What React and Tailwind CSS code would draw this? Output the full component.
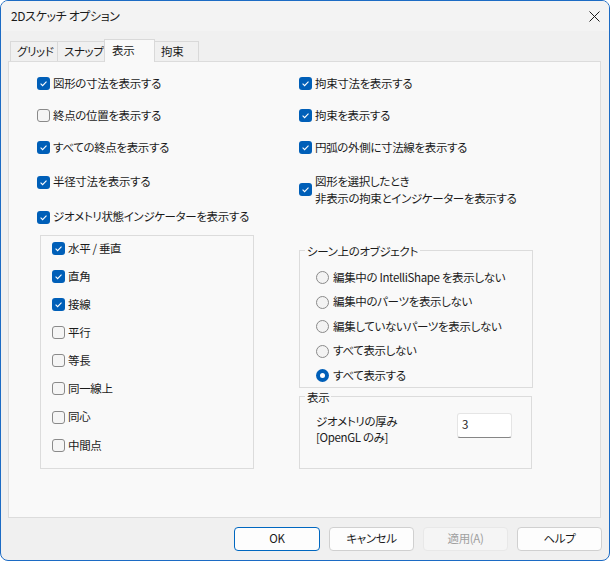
import React from 'react';

const font = "font-['Noto_Sans_CJK_JP','Noto_Sans',sans-serif] [font-feature-settings:'palt'] tracking-[-0.35px]";

const Box = ({ checked }) =>
  checked ? (
    <span className="w-[13px] h-[13px] rounded-[3px] bg-[#005fb8] flex items-center justify-center shrink-0">
      <svg width="13" height="13" viewBox="0 0 13 13">
        <path d="M3.6 6.7 L5.6 8.7 L9.5 4.6" fill="none" stroke="#ffffff" strokeWidth="1.1" />
      </svg>
    </span>
  ) : (
    <span className="w-[13px] h-[13px] rounded-[3px] border border-[#8a8a8a] bg-[#f5f5f5] shrink-0" />
  );

const Check = ({ checked, children, className = '' }) => (
  <div className={`flex items-center gap-[3px] h-[20px] ${className}`}>
    <Box checked={checked} />
    <span className="whitespace-nowrap">{children}</span>
  </div>
);

const Radio = ({ checked, children }) => (
  <div className="flex items-center gap-[4px] h-[20px]">
    {checked ? (
      <span className="w-[13px] h-[13px] rounded-full bg-[#005fb8] flex items-center justify-center shrink-0">
        <span className="w-[5px] h-[5px] rounded-full bg-white" />
      </span>
    ) : (
      <span className="w-[13px] h-[13px] rounded-full border border-[#8a8a8a] bg-[#f3f3f3] shrink-0" />
    )}
    <span className="whitespace-nowrap">{children}</span>
  </div>
);

const Button = ({ children, primary, disabled }) => (
  <button
    className={`h-[24px] rounded-[4px] border ${primary ? 'w-[86px]' : 'w-[85px]'} ${
      primary
        ? 'border-[#0067c0] bg-[#fdfdfd] text-[#1b1b1b]'
        : disabled
        ? 'border-[#e8e8e8] bg-[#f5f5f5] text-[#a0a0a0]'
        : 'border-[#d0d0d0] bg-[#fdfdfd] text-[#1b1b1b]'
    }`}
  >
    {children}
  </button>
);

const tabs = [
  { label: 'グリッド', w: 'w-[48px]' },
  { label: 'スナップ', w: 'w-[48px]' },
  { label: '表示', w: 'w-[51px]', active: true },
  { label: '拘束', w: 'w-[45px]' },
];

const sub = [
  ['水平 / 垂直', true],
  ['直角', true],
  ['接線', true],
  ['平行', false],
  ['等長', false],
  ['同一線上', false],
  ['同心', false],
  ['中間点', false],
];

const scene = [
  '編集中の IntelliShape を表示しない',
  '編集中のパーツを表示しない',
  '編集していないパーツを表示しない',
  'すべて表示しない',
  'すべて表示する',
];

export default function App() {
  return (
    <div
      className={`w-[610px] h-[561px] bg-[#f0f0f0] border border-[#1c6bc4] rounded-[8px] overflow-hidden flex flex-col text-[11.5px] text-[#1b1b1b] ${font}`}
    >
      {/* Title bar */}
      <div className="h-[30px] shrink-0 bg-[#f3f3f3] flex items-center justify-between pl-[10px] pr-[9px]">
        <span className="text-[12px]">2Dスケッチ オプション</span>
        <svg width="11" height="11" viewBox="0 0 11 11">
          <path d="M0.5 0.5 L10.5 10.5 M10.5 0.5 L0.5 10.5" stroke="#1b1b1b" strokeWidth="1" />
        </svg>
      </div>

      {/* Tabs */}
      <div className="mt-[8px] ml-[9px] h-[22px] flex items-end">
        {tabs.map((t, i) => (
          <div
            key={t.label}
            className={`${t.w} border border-b-0 border-[#d9d9d9] pl-[6px] flex items-center whitespace-nowrap ${
              t.active
                ? 'h-[23px] -mb-px -ml-px relative z-10 bg-[#f9f9f9] pl-[7px]'
                : i === 0
                ? 'h-[20px] bg-[#f0f0f0]'
                : 'h-[20px] bg-[#f0f0f0] -ml-px'
            }`}
          >
            {t.label}
          </div>
        ))}
      </div>

      {/* Panel */}
      <div className="ml-[7px] w-[593px] h-[457px] shrink-0 border border-[#dcdcdc] bg-[#f9f9f9] pl-[28px] pt-[11.5px] grid grid-cols-[262px_1fr]">
        {/* Left column */}
        <div className="flex flex-col">
          <Check checked>図形の寸法を表示する</Check>
          <Check className="mt-[12px]">終点の位置を表示する</Check>
          <Check checked className="mt-[12px]">すべての終点を表示する</Check>
          <Check checked className="mt-[14.5px]">半径寸法を表示する</Check>
          <Check checked className="mt-[15px]">ジオメトリ状態インジケーターを表示する</Check>

          <div className="mt-[8px] ml-[3px] w-[214px] h-[234px] border border-[#dcdcdc] pl-[11px] pt-[2.5px] flex flex-col gap-[8.1px]">
            {sub.map(([label, on]) => (
              <Check key={label} checked={on}>{label}</Check>
            ))}
          </div>
        </div>

        {/* Right column */}
        <div className="flex flex-col">
          <Check checked>拘束寸法を表示する</Check>
          <Check checked className="mt-[12px]">拘束を表示する</Check>
          <Check checked className="mt-[12px]">円弧の外側に寸法線を表示する</Check>
          <div className="mt-[15px] flex items-center gap-[3px] h-[34px]">
            <Box checked />
            <span className="leading-[17px] whitespace-nowrap">
              図形を選択したとき
              <br />
              非表示の拘束とインジケーターを表示する
            </span>
          </div>

          <fieldset className="mt-[36px] w-[234px] border border-[#dcdcdc] pl-[16px] pt-[9px] pb-[1px]">
            <legend className="-ml-[11px] px-[2px] leading-[16px]">シーン上のオブジェクト</legend>
            <div className="flex flex-col gap-[4.5px]">
              {scene.map((s, i) => (
                <Radio key={s} checked={i === 4}>{s}</Radio>
              ))}
            </div>
          </fieldset>

          <fieldset className="mt-[1px] w-[233px] h-[80px] border border-[#dcdcdc] pl-[16px] pt-[8px]">
            <legend className="-ml-[11px] px-[2px] leading-[16px]">表示</legend>
            <div className="flex items-start">
              <div className="w-[141px] leading-[16px]">
                ジオメトリの厚み
                <br />
                [OpenGL のみ]
              </div>
              <div className="w-[55px] h-[25px] bg-white border border-[#e5e5e5] border-b-[#868686] rounded-[3px] pl-[4px] flex items-center">
                3
              </div>
            </div>
          </fieldset>
        </div>
      </div>

      {/* Buttons */}
      <div className="mt-[9px] pr-[7px] flex justify-end gap-[9px]">
        <Button primary>OK</Button>
        <Button>キャンセル</Button>
        <Button disabled>適用(A)</Button>
        <Button>ヘルプ</Button>
      </div>
    </div>
  );
}
